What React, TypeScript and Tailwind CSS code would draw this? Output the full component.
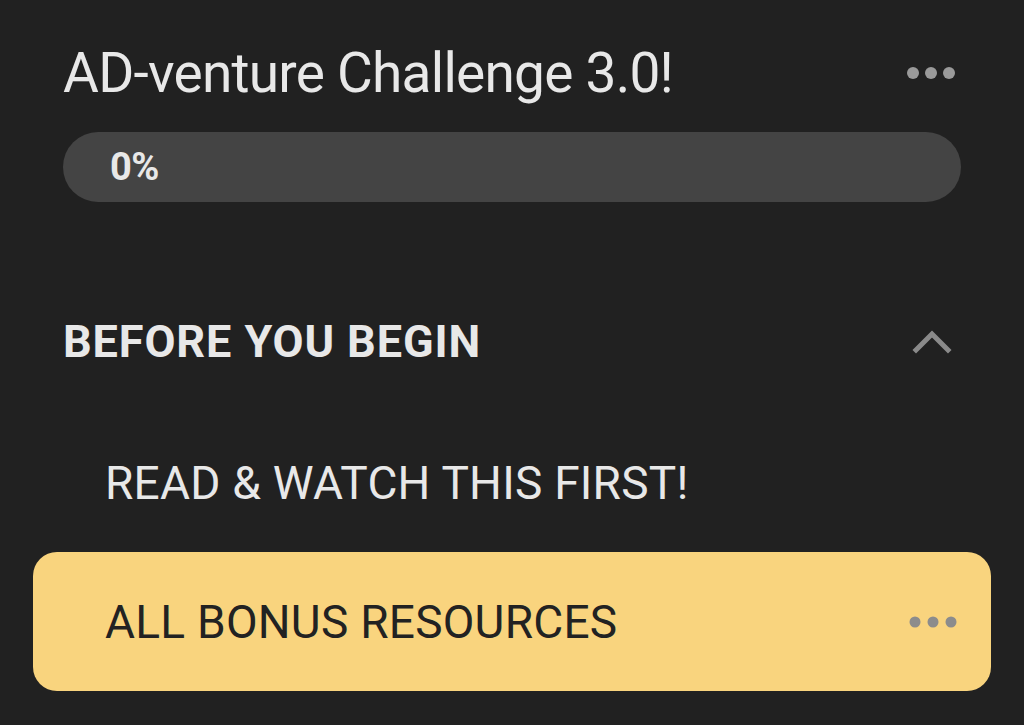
import React from "react";

function Dots({ color, r = 6 }: { color: string; r?: number }) {
  return (
    <svg width="48" height="12" viewBox="0 0 48 12" className="block">
      <circle cx="6" cy="6" r={r} fill={color} />
      <circle cx="24" cy="6" r={r} fill={color} />
      <circle cx="42" cy="6" r={r} fill={color} />
    </svg>
  );
}

export default function App() {
  return (
    <div
      className="w-[1024px] h-[725px] overflow-hidden bg-[#212121] px-[63px] pt-[41px]"
      style={{ fontFamily: "Roboto, 'Noto Sans', sans-serif" }}
    >
      <div className="flex h-[64px] items-center justify-between">
        <h1 className="text-[55px] leading-[64px] font-normal text-[#e8e8e8] tracking-[-0.75px]">
          AD-venture Challenge 3.0!
        </h1>
        <div className="pr-[6px]">
          <Dots color="#9a9a9a" />
        </div>
      </div>

      <div className="mt-[27px] flex h-[70px] items-center rounded-full bg-[#444444] pl-[47px]">
        <span className="text-[38px] font-bold leading-none text-[#e8e8e8] tracking-[-0.5px]">0%</span>
      </div>

      <div className="mt-[99px] flex h-[80px] items-center justify-between">
        <span className="text-[45px] font-bold leading-none text-[#e8e8e8] tracking-[0.9px]">
          BEFORE YOU BEGIN
        </span>
        <svg width="40" height="26" viewBox="0 0 40 26" className="mr-[9px] block">
          <polyline
            points="4,22 20,6 36,22"
            fill="none"
            stroke="#8a8a8a"
            strokeWidth="5"
            strokeLinecap="square"
          />
        </svg>
      </div>

      <div className="mt-[62px] flex h-[80px] items-center pl-[42px]">
        <span className="text-[46px] font-normal leading-none text-[#e8e8e8] tracking-[0.25px]">
          READ &amp; WATCH THIS FIRST!
        </span>
      </div>

      <div className="-mx-[30px] mt-[29px] flex h-[139px] items-center justify-between rounded-[24px] bg-[#f9d47e] pl-[72px] pr-[34px]">
        <span className="text-[46px] font-normal leading-none text-[#222222] tracking-[0.25px]">
          ALL BONUS RESOURCES
        </span>
        <Dots color="#8c8c8c" r={5.5} />
      </div>
    </div>
  );
}
